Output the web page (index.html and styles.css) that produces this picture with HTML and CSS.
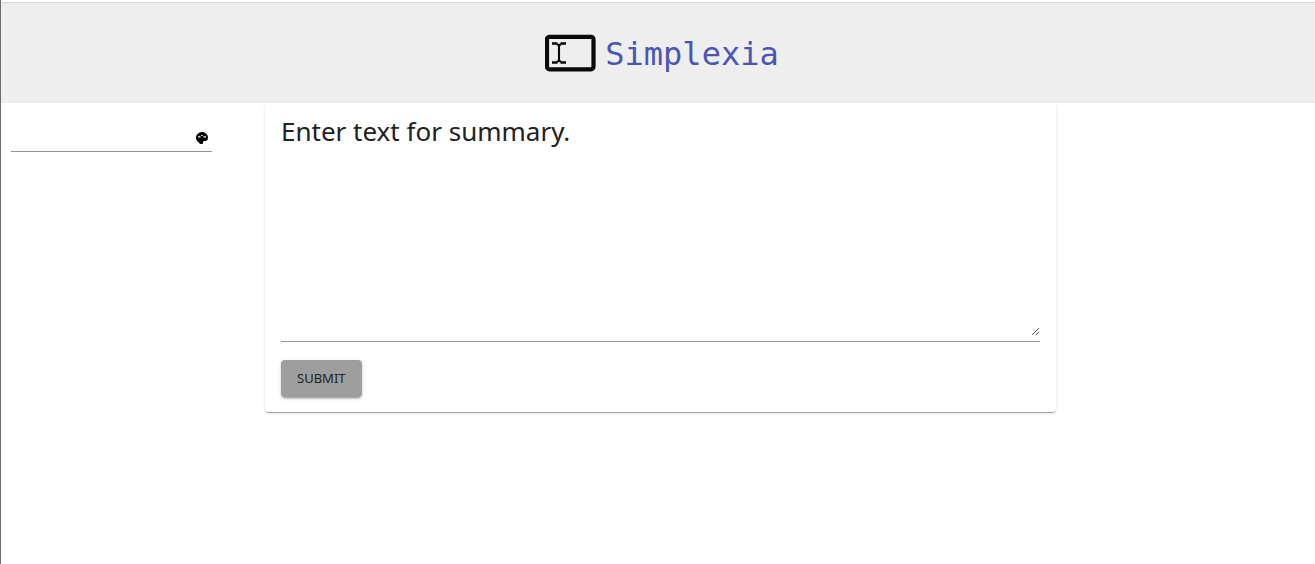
FILE: index.html
```html
<!DOCTYPE html>
<html lang="en">
<head>
<meta charset="utf-8">
<title>Simplexia</title>
<link rel="stylesheet" href="styles.css">
</head>
<body>
<header class="header">
  <svg class="logo" viewBox="0 0 52 38" aria-hidden="true">
    <rect x="2" y="2.800" width="46.500" height="32.500" rx="2.500" fill="none" stroke="#080a0a" stroke-width="4.200"/>
    <path d="M7 9.500h5.500M15.500 9.500h5.500M7 28.500h5.500M15.500 28.500h5.500" stroke="#080a0a" stroke-width="2.400"/>
    <path d="M12 10.300l2 1 2-1M14 11v16M12 27.700l2-1 2 1" fill="none" stroke="#080a0a" stroke-width="2.100"/>
  </svg>
  <h1 class="brand">Simplexia</h1>
</header>
<main class="main">
  <aside class="side">
    <div class="color-field">
      <input class="color-input" type="text" aria-label="Color">
      <button class="palette" type="button" aria-label="Choose color">
        <svg class="palette-icon" viewBox="0 0 12 12" aria-hidden="true">
          <path fill="#000" fill-rule="evenodd" d="M6 0C3 0 0 2.500 0 5.500c0 2 .8 3.500 2 4.300.8.500 1.500 2.200 2.500 2.200H6c1.300 0 1-1 1-1.700C7 9.300 7.700 9 8.500 9h1c1.500 0 2.500-1.500 2.500-3C12 2.500 9.500 0 6 0zM2 4.200h2.500v1.400H2zM7.500 4.200H10v1.400H7.500zM5.200 3h1.600v1H5.200z"/>
        </svg>
      </button>
    </div>
  </aside>
  <form class="card">
    <div class="text-field">
      <textarea class="text" aria-label="Text">Enter text for summary.</textarea>
    </div>
    <button class="submit" type="button">SUBMIT</button>
  </form>
</main>
</body>
</html>
```
FILE: styles.css
```css
* { box-sizing: border-box; }
body {
  margin: 0;
  min-height: 100vh;
  padding-top: 2px;
  border-left: 1px solid #6b6b6b;
  background: #fff;
  font-family: "Noto Sans", "Open Sans", sans-serif;
}
.header {
  display: flex;
  align-items: center;
  justify-content: center;
  gap: 8px;
  height: 101px;
  padding-left: 8px;
  border-top: 1px solid #d9d9d9;
  background: #eee;
}
.logo { width: 52px; height: 38px; }
.brand {
  margin: 0;
  padding-top: 2px;
  color: #4a55b5;
  font: 400 32px/36px "DejaVu Sans Mono", monospace;
}
.main {
  display: grid;
  grid-template-columns: 264px minmax(0, 1fr) 259px;
  align-items: start;
}
.side { padding: 22px 53px 0 10px; }
.color-field {
  display: flex;
  align-items: center;
  height: 27px;
  border-bottom: 1px solid #949494;
}
.color-input {
  flex: 1;
  min-width: 0;
  border: 0;
  padding: 0;
  outline: 0;
  background: none;
  font: inherit;
}
.palette {
  display: flex;
  padding: 0 4px 0 0;
  border: 0;
  background: none;
}
.palette-icon { width: 12px; height: 12px; }
.card {
  display: flex;
  flex-direction: column;
  align-items: flex-start;
  gap: 18px;
  padding: 10px 16px 15px;
  border-radius: 4px;
  background: #fff;
  box-shadow: 0 2px 1px -1px rgba(0,0,0,.2), 0 1px 1px rgba(0,0,0,.14), 0 1px 3px rgba(0,0,0,.12);
}
.text-field {
  width: 100%;
  padding-bottom: 5px;
  border-bottom: 1px solid #949494;
}
.text {
  display: block;
  width: 100%;
  height: 223px;
  padding: 0;
  border: 0;
  outline: 0;
  background: none;
  color: #212121;
  font: 400 26px/36px "Noto Sans", "Open Sans", sans-serif;
  resize: vertical;
}
.submit {
  padding: 6px 16px;
  border: 0;
  border-radius: 4px;
  background: #9e9e9e;
  color: #212121;
  font: 400 13px/25px "Noto Sans", "Open Sans", sans-serif;
  box-shadow: 0 3px 1px -2px rgba(0,0,0,.2), 0 2px 2px rgba(0,0,0,.14), 0 1px 5px rgba(0,0,0,.12);
}
```
